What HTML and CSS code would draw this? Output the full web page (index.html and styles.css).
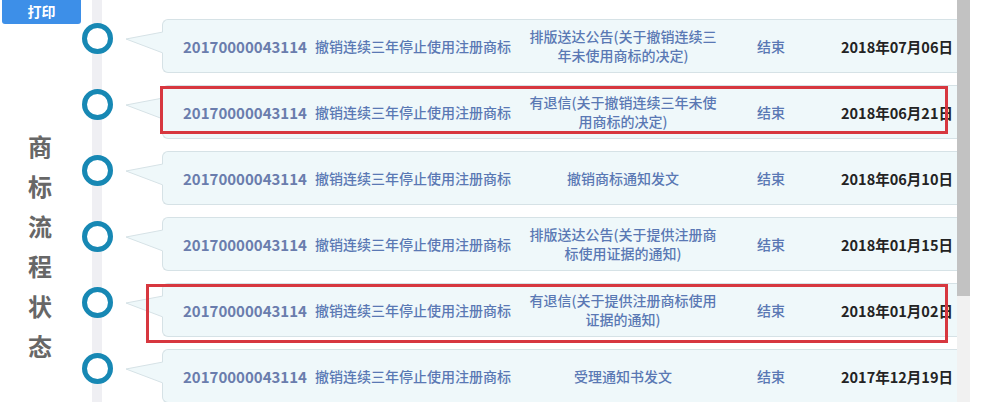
FILE: index.html
```html
<!DOCTYPE html>
<html lang="zh-CN">
<head>
<meta charset="utf-8">
<title>商标流程状态</title>
<link rel="stylesheet" href="styles.css">
</head>
<body>
<div class="page">
  <aside class="sidebar">
    <button class="print-btn">打印</button>
    <div class="label">
      <span>商</span><span>标</span><span>流</span><span>程</span><span>状</span><span>态</span>
    </div>
  </aside>

  <main class="rows">
    <div class="row">
      <div class="node"></div>
      <svg class="arrow" width="38" height="54" viewBox="0 0 38 54"><polygon points="38,13 1,20 38,34" fill="#eff8fa" stroke="#d6e2e6" stroke-width="1"/><rect x="37" y="13.5" width="2" height="20" fill="#eff8fa"/></svg>
      <div class="card">
        <span class="c-id">20170000043114</span>
        <span class="c-name">撤销连续三年停止使用注册商标</span>
        <span class="c-status">排版送达公告(关于撤销连续三年未使用商标的决定)</span>
        <span class="c-end">结束</span>
        <span class="c-date">2018年07月06日</span>
      </div>
    </div>
    <div class="row">
      <div class="node"></div>
      <svg class="arrow" width="38" height="54" viewBox="0 0 38 54"><polygon points="38,13 1,20 38,34" fill="#eff8fa" stroke="#d6e2e6" stroke-width="1"/><rect x="37" y="13.5" width="2" height="20" fill="#eff8fa"/></svg>
      <div class="card">
        <span class="c-id">20170000043114</span>
        <span class="c-name">撤销连续三年停止使用注册商标</span>
        <span class="c-status">有退信(关于撤销连续三年未使用商标的决定)</span>
        <span class="c-end">结束</span>
        <span class="c-date">2018年06月21日</span>
      </div>
    </div>
    <div class="row">
      <div class="node"></div>
      <svg class="arrow" width="38" height="54" viewBox="0 0 38 54"><polygon points="38,13 1,20 38,34" fill="#eff8fa" stroke="#d6e2e6" stroke-width="1"/><rect x="37" y="13.5" width="2" height="20" fill="#eff8fa"/></svg>
      <div class="card">
        <span class="c-id">20170000043114</span>
        <span class="c-name">撤销连续三年停止使用注册商标</span>
        <span class="c-status">撤销商标通知发文</span>
        <span class="c-end">结束</span>
        <span class="c-date">2018年06月10日</span>
      </div>
    </div>
    <div class="row">
      <div class="node"></div>
      <svg class="arrow" width="38" height="54" viewBox="0 0 38 54"><polygon points="38,13 1,20 38,34" fill="#eff8fa" stroke="#d6e2e6" stroke-width="1"/><rect x="37" y="13.5" width="2" height="20" fill="#eff8fa"/></svg>
      <div class="card">
        <span class="c-id">20170000043114</span>
        <span class="c-name">撤销连续三年停止使用注册商标</span>
        <span class="c-status">排版送达公告(关于提供注册商标使用证据的通知)</span>
        <span class="c-end">结束</span>
        <span class="c-date">2018年01月15日</span>
      </div>
    </div>
    <div class="row">
      <div class="node"></div>
      <svg class="arrow" width="38" height="54" viewBox="0 0 38 54"><polygon points="38,13 1,20 38,34" fill="#eff8fa" stroke="#d6e2e6" stroke-width="1"/><rect x="37" y="13.5" width="2" height="20" fill="#eff8fa"/></svg>
      <div class="card">
        <span class="c-id">20170000043114</span>
        <span class="c-name">撤销连续三年停止使用注册商标</span>
        <span class="c-status">有退信(关于提供注册商标使用证据的通知)</span>
        <span class="c-end">结束</span>
        <span class="c-date">2018年01月02日</span>
      </div>
    </div>
    <div class="row">
      <div class="node"></div>
      <svg class="arrow" width="38" height="54" viewBox="0 0 38 54"><polygon points="38,13 1,20 38,34" fill="#eff8fa" stroke="#d6e2e6" stroke-width="1"/><rect x="37" y="13.5" width="2" height="20" fill="#eff8fa"/></svg>
      <div class="card">
        <span class="c-id">20170000043114</span>
        <span class="c-name">撤销连续三年停止使用注册商标</span>
        <span class="c-status">受理通知书发文</span>
        <span class="c-end">结束</span>
        <span class="c-date">2017年12月19日</span>
      </div>
    </div>
  </main>

  <div class="scrollbar"><div class="thumb"></div></div>
  <div class="edge"></div>

  <div class="mark mark-1"></div>
  <div class="mark mark-2"></div>
</div>
</body>
</html>
```

FILE: styles.css
```css
* { box-sizing: border-box; }

html, body {
  margin: 0;
  padding: 0;
  background: #ffffff;
  overflow: hidden;
}

body {
  font-family: "Noto Sans CJK SC", "Noto Sans", sans-serif;
  width: 984px;
  height: 402px;
}

.page {
  position: relative;
  display: flex;
  height: 402px;
  overflow: hidden;
}

.sidebar {
  width: 80px;
  flex: none;
}

.print-btn {
  display: block;
  margin-left: 2px;
  width: 79px;
  height: 24px;
  border: none;
  border-radius: 0 0 3px 3px;
  background: #3d8fe8;
  color: #ffffff;
  font-family: "Noto Sans CJK SC", sans-serif;
  font-size: 14px;
  font-weight: 700;
  line-height: 22px;
  padding: 0 0 2px;
}

.label {
  margin-top: 102px;
  display: flex;
  flex-direction: column;
  align-items: center;
  color: #676767;
  font-size: 24px;
  font-weight: 700;
  line-height: 40px;
}

.rows {
  flex: 1;
  display: flex;
  flex-direction: column;
  gap: 12px;
  padding-top: 19px;
  background: linear-gradient(to right, transparent 12px, #efeff3 12px, #efeff3 22px, transparent 22px);
}

.row {
  display: flex;
  align-items: flex-start;
  height: 54px;
  flex: none;
}

.node {
  flex: none;
  width: 31px;
  height: 31px;
  margin: 4px 0 0 2px;
  border: 5px solid #1788b4;
  border-radius: 50%;
  background: #ffffff;
}

.arrow {
  flex: none;
  display: block;
  margin-left: 12px;
  margin-right: -1px;
  position: relative;
  z-index: 1;
}

.card {
  flex: 1;
  height: 54px;
  display: grid;
  grid-template-columns: 132px 210px 196px 100px 1fr;
  align-items: center;
  padding-left: 20px;
  background: #eff8fa;
  border: 1px solid #d6e2e6;
  border-right: none;
  border-radius: 6px 0 0 6px;
  color: #5a78b4;
  font-size: 14px;
  white-space: nowrap;
}

.c-id {
  color: #6a7dad;
  font-weight: 700;
  font-size: 15px;
}

.c-name {
  font-weight: 500;
}

.c-status {
  white-space: normal;
  text-align: center;
  line-height: 19px;
  font-weight: 500;
  padding: 0 4px;
}

.c-end {
  text-align: center;
  font-weight: 500;
}

.c-date {
  padding-left: 20px;
  color: #232323;
  font-weight: 700;
  font-size: 14.5px;
}

.scrollbar {
  flex: none;
  width: 13px;
  height: 402px;
  background: #f1f1f1;
}

.thumb {
  height: 296px;
  background: #c2c2c2;
}

.edge {
  flex: none;
  width: 14px;
  background: #ffffff;
}

.mark {
  position: absolute;
  border: 3px solid #d7373f;
  pointer-events: none;
  z-index: 2;
}

.mark-1 {
  left: 160px;
  top: 86px;
  width: 788px;
  height: 48px;
}

.mark-2 {
  left: 146px;
  top: 284px;
  width: 802px;
  height: 59px;
}
```
